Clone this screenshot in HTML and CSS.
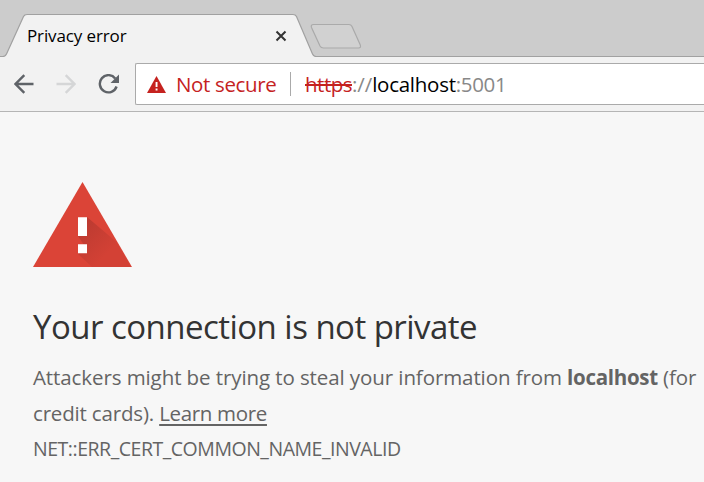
FILE: index.html
```html
<!DOCTYPE html>
<html lang="en">
<head>
<meta charset="utf-8">
<title>Privacy error</title>
<link rel="stylesheet" href="styles.css">
</head>
<body>
<header class="tabstrip">
  <svg class="tab-shapes" width="704" height="57" viewBox="0 0 704 57" aria-hidden="true">
    <path class="tab-fill" d="M0 57V56.500H3Q5.500 56.500 6.500 54L23.500 16.500Q24.500 14.500 27 14.500H293Q295.500 14.500 296.500 16.500L312.500 54Q313.500 56.500 316 56.500H704V57Z"/>
    <path class="tab-line" d="M0 56.500H3Q5.500 56.500 6.500 54L23.500 16.500Q24.500 14.500 27 14.500H293Q295.500 14.500 296.500 16.500L312.500 54Q313.500 56.500 316 56.500H704"/>
    <path class="new-tab" d="M313.500 24.500H349Q351 24.500 352 26.500L360.300 45Q361.300 48 358.500 48H323.500Q321 48 320 46L311.500 27.500Q310.500 24.500 313.500 24.500Z"/>
  </svg>
  <div class="tab">
    <span class="tab-title">Privacy error</span>
    <svg class="close" width="12" height="12" viewBox="0 0 12 12"><path d="M1.500 1.500L10.500 10.500M10.500 1.500L1.500 10.500"/></svg>
  </div>
</header>
<nav class="toolbar">
  <svg class="nav-icon" width="20" height="20" viewBox="0 0 20 20"><path d="M19.500 10H1.800M10.300 1.200L1.500 10L10.300 18.800"/></svg>
  <svg class="nav-icon disabled" width="20" height="20" viewBox="0 0 20 20"><path d="M.5 10H18.200M9.700 1.200L18.500 10L9.700 18.800"/></svg>
  <svg class="nav-icon" width="22" height="20" viewBox="0 0 22 20"><path d="M17.200 4.400A8.600 8.600 0 1 0 18.600 12.500"/><path class="solid" d="M21 .5V9H12.500Z"/></svg>
  <div class="omnibox">
    <svg class="warn" width="19" height="17" viewBox="0 0 19 17"><path class="warn-bg" d="M9.500 0L19 17H0Z"/><path class="warn-mark" d="M8.600 6H10.500V11H8.600ZM8.600 12.500H10.500V14.500H8.600Z"/></svg>
    <span class="status">Not secure</span>
    <span class="divider"></span>
    <span class="url"><span class="scheme">https</span><span class="slashes">://</span><span class="host">localhost</span><span class="port">:5001</span></span>
  </div>
</nav>
<main class="page">
  <svg class="alert" width="99" height="85" viewBox="0 0 99 85">
    <defs>
      <linearGradient id="shade" gradientUnits="userSpaceOnUse" x1="50" y1="44" x2="76" y2="70"><stop offset="0" stop-color="#bd3b31"/><stop offset="1" stop-color="#d34135"/></linearGradient>
    </defs>
    <path fill="#db4437" d="M49.500 0L99 85H0Z"/>
    <path fill="url(#shade)" d="M54 35L83.500 60L98 85H59L45 72L51 63L45 54Z"/>
    <path fill="#fff" d="M45 35.300H54V54H45ZM45 62.300H54V71.300H45Z"/>
  </svg>
  <h1>Your connection is not private</h1>
  <p class="message"><span>Attackers might be trying to steal your information from </span><strong>localhost</strong><span> (for</span><br><span class="cards">credit cards). </span><a class="learn">Learn more</a></p>
  <p class="code">NET::ERR_CERT_COMMON_NAME_INVALID</p>
</main>
</body>
</html>
```
FILE: styles.css
```css
* { box-sizing: border-box; }
body {
  margin: 0;
  height: 482px;
  overflow: hidden;
  background: #f7f7f7;
  font-family: "Open Sans", "Noto Sans", sans-serif;
}
svg { display: block; flex: none; }
.tabstrip { position: relative; height: 57px; background: #ccc; }
.tab-shapes { position: absolute; inset: 0; }
.tab-fill { fill: #f2f2f2; }
.tab-line { fill: none; stroke: #a1a1a1; stroke-width: 1.2; }
.new-tab { fill: #d1d1d1; stroke: #aaa; stroke-width: 1.2; }
.tab {
  position: relative;
  display: flex;
  align-items: center;
  justify-content: space-between;
  width: 287px;
  height: 57px;
  padding: 15px 0 0 27px;
}
.tab-title { font-size: 17px; line-height: 24px; color: #000; letter-spacing: -.12px; }
.close { fill: none; stroke: #333; stroke-width: 2; }
.toolbar {
  display: flex;
  align-items: center;
  height: 55px;
  padding-left: 14px;
  background: #f2f2f2;
  border-bottom: 1px solid #b5b5b5;
}
.nav-icon { margin-right: 22px; fill: none; stroke: #5f6368; stroke-width: 2.4; }
.nav-icon.disabled { stroke: #d5d6d7; }
.nav-icon .solid { fill: #5f6368; stroke: none; }
.nav-icon:nth-of-type(3) { margin-right: 15px; }
.omnibox {
  display: flex;
  align-items: center;
  flex: 1;
  height: 42px;
  padding-left: 11px;
  background: #fff;
  border: 1px solid #aaa;
  border-right: 0;
  border-radius: 2px 0 0 2px;
  font-size: 20.5px;
  line-height: 30px;
  white-space: nowrap;
}
.warn-bg { fill: #c5221f; }
.warn-mark { fill: #fff; }
.status { flex: none; width: 124px; padding-left: 10px; color: #c5221f; letter-spacing: -.35px; }
.divider { flex: none; width: 1px; height: 24px; margin-right: 14px; background: #aaa; }
.scheme { color: #c5221f; letter-spacing: -.5px; text-decoration: line-through; text-decoration-thickness: 2px; }
.slashes { color: #888; letter-spacing: -.1px; }
.port { color: #888; letter-spacing: -.35px; }
.host { color: #000; letter-spacing: -.25px; }
.page { padding: 70px 0 0 33px; white-space: nowrap; }
h1 { margin: 36px 0 0; font-size: 33px; line-height: 48px; font-weight: 400; letter-spacing: -.53px; color: #333; }
.message { margin: 8px 0 0; font-size: 20.5px; line-height: 36px; color: #646464; white-space: pre; letter-spacing: -.09px; }
.message strong { letter-spacing: -.3px; }
.cards { letter-spacing: -.17px; }
.learn { letter-spacing: -.33px; text-decoration: underline; text-decoration-thickness: 2px; text-underline-offset: 3px; text-decoration-skip-ink: none; }
.code { margin: 0; font-size: 19.5px; line-height: 36px; letter-spacing: -.47px; color: #646464; }
```
